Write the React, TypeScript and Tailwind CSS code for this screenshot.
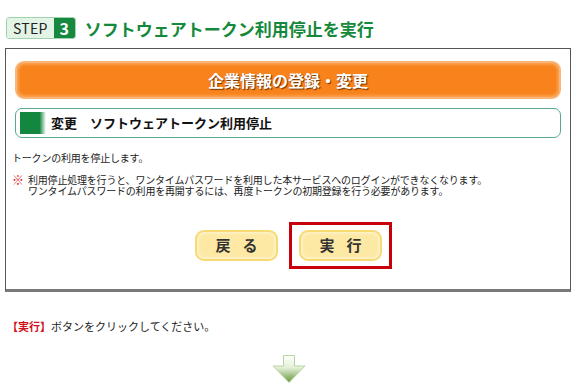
import React from "react";

function DownArrow() {
  return (
    <svg width="34" height="28" viewBox="0 0 34 28">
      <defs>
        <linearGradient id="arrowFill" x1="0" y1="0" x2="0" y2="1">
          <stop offset="0%" stopColor="#ffffff" />
          <stop offset="45%" stopColor="#e4f0d8" />
          <stop offset="100%" stopColor="#62983a" />
        </linearGradient>
      </defs>
      <path
        d="M11.5 0.5 H22.5 V11 H33 L17 27.5 L1 11 H11.5 Z"
        fill="url(#arrowFill)"
        stroke="#b5d6a0"
        strokeWidth="1"
      />
    </svg>
  );
}

function YellowButton({ label }: { label: string }) {
  return (
    <button className="w-[83px] h-[31px] rounded-[9px] bg-[#fde9a3] border-2 border-[#f8da74] shadow-[inset_0_0_4px_rgba(255,255,255,0.9)] font-bold text-[15px] text-[#333] tracking-[12px] pl-[12px]">
      {label}
    </button>
  );
}

export default function App() {
  return (
    <main
      className="w-[581px] h-[391px] bg-white overflow-hidden text-[#222]"
      style={{ fontFamily: '"Noto Sans CJK JP", "Noto Sans", sans-serif' }}
    >
      {/* step header */}
      <div className="flex items-center pt-[17px] pl-[6px]">
        <div className="flex h-[22px] rounded-[3px] overflow-hidden border border-[#9fd2ad]">
          <span className="bg-[#e3f3e6] text-[#222] text-[14px] leading-[20px] px-[6px] tracking-[0.3px]">
            STEP
          </span>
          <span className="bg-[#16883f] text-white font-bold text-[16px] leading-[20px] w-[21px] text-center">
            3
          </span>
        </div>
        <h1 className="ml-[9px] text-[#15893b] text-[17px] font-bold leading-none">
          ソフトウェアトークン利用停止を実行
        </h1>
      </div>

      {/* main panel */}
      <section className="mt-[9px] ml-[5px] mr-[10px] h-[244px] border border-[#555] border-b-[3px] border-b-[#7a7a7a] pt-[12px]">
        <div className="px-[9px]">
          <div className="h-[38px] rounded-[9px] bg-[#f8821b] border-2 border-[#fbb47a] flex items-center justify-center shadow-[inset_0_0_4px_rgba(255,220,180,0.8)]">
            <span className="text-white font-bold text-[16px] [text-shadow:1px_1px_1px_#6b3300]">
              企業情報の登録・変更
            </span>
          </div>

          <div className="mt-[9px] h-[30px] rounded-[7px] border border-[#59a889] flex items-center pl-[4px]">
            <div className="w-[26px] h-[22px] bg-[linear-gradient(to_right,#13873f_0%,#13873f_75%,#ffffff_100%)]" />
            <span className="ml-[5px] font-bold text-[13px] text-[#111]">
              変更　ソフトウェアトークン利用停止
            </span>
          </div>
        </div>

        <div className="pl-[6px] pt-[14px] text-[10px] leading-[11px] tracking-[-0.2px] text-[#222]">
          <p>トークンの利用を停止します。</p>
          <div className="mt-[11px] flex">
            <span className="text-[#e0161e] text-[12px] w-[16px] shrink-0">※</span>
            <p>
              利用停止処理を行うと、ワンタイムパスワードを利用した本サービスへのログインができなくなります。
              <br />
              ワンタイムパスワードの利用を再開するには、再度トークンの初期登録を行う必要があります。
            </p>
          </div>
        </div>

        <div className="mt-[26px] flex items-center pl-[189px]">
          <YellowButton label="戻る" />
          <div className="ml-[11px] border-[3px] border-[#c8000b] px-[7px] py-[5px]">
            <YellowButton label="実行" />
          </div>
        </div>
      </section>

      {/* instruction */}
      <p className="mt-[26px] ml-[7px] text-[11px] leading-[16px] text-[#222]">
        <span className="text-[#d0121b] font-bold">【実行】</span>
        ボタンをクリックしてください。
      </p>

      <div className="mt-[21px] flex justify-center pr-[3px]">
        <DownArrow />
      </div>
    </main>
  );
}
